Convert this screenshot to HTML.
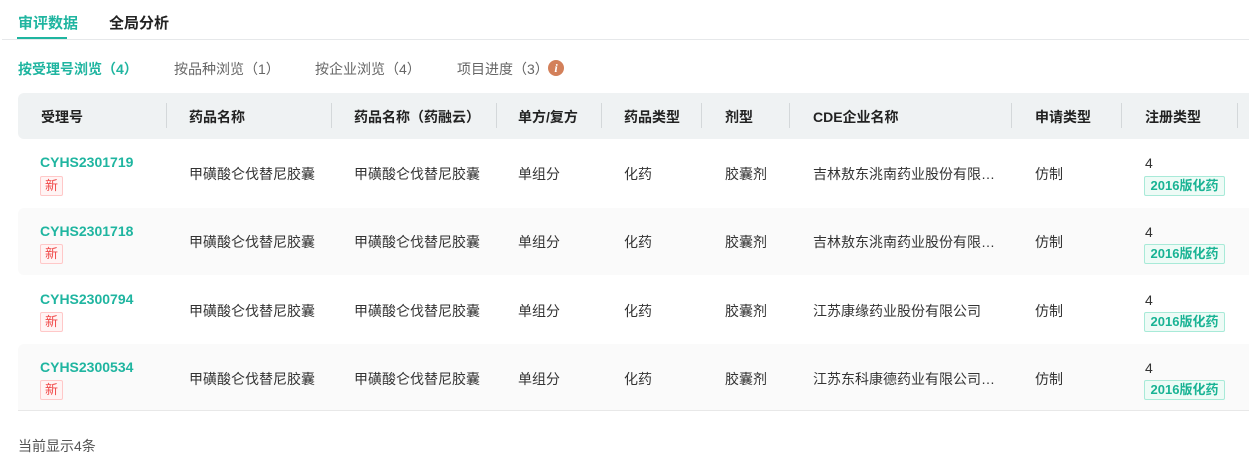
<!DOCTYPE html>
<html><head><meta charset="utf-8"><style>
*{margin:0;padding:0;box-sizing:border-box}
body{width:1249px;height:466px;background:#fff;font-family:"Liberation Sans","Noto Sans CJK SC",sans-serif;color:#333;position:relative;overflow:hidden;font-size:14px}
.a{position:absolute;white-space:nowrap}
.teal{color:#1fb5a0}
.b{font-weight:bold}
.row{position:absolute;left:18px;width:1240px;height:67px;border-radius:6px}
.tag{position:absolute;border:1px solid #ffc8c8;background:#fff4f4;color:#f04848;font-size:13px;line-height:18px;width:23px;height:20px;text-align:center;border-radius:2px}
.reg{position:absolute;border:1px solid #a8ead8;background:#eefbf6;color:#19b394;font-size:13px;font-weight:bold;line-height:18px;height:20px;width:81px;text-align:center;border-radius:2px}
.sep{position:absolute;top:103px;width:1px;height:25px;background:#d4d8da}
</style></head><body>
<div class="a teal b" style="left:18px;top:12px;font-size:15px">审评数据</div>
<div class="a b" style="left:109px;top:12px;font-size:15px;color:#222">全局分析</div>
<div class="a" style="left:17px;top:37px;width:50px;height:3px;background:#1fb5a0"></div>
<div class="a" style="left:2px;top:39px;width:1247px;height:1px;background:#e6e8ea"></div>
<div class="a teal b" style="left:18px;top:59px">按受理号浏览（4）</div>
<div class="a" style="left:174px;top:59px;color:#666">按品种浏览（1）</div>
<div class="a" style="left:315px;top:59px;color:#666">按企业浏览（4）</div>
<div class="a" style="left:457px;top:59px;color:#666">项目进度（3）</div>
<div class="a" style="left:548px;top:60px;width:16px;height:16px;border-radius:50%;background:#d3805a;color:#fff;font:italic bold 12px/16px 'Liberation Serif',serif;text-align:center">i</div>

<div class="a" style="left:18px;top:93px;width:1240px;height:46px;background:#eff2f3;border-radius:6px 0 0 6px"></div>
<div class="sep" style="left:166px"></div><div class="sep" style="left:331px"></div><div class="sep" style="left:496px"></div><div class="sep" style="left:601px"></div><div class="sep" style="left:701px"></div><div class="sep" style="left:789px"></div><div class="sep" style="left:1011px"></div><div class="sep" style="left:1121px"></div><div class="sep" style="left:1237px"></div>
<div class="a b" style="top:107px;left:41px;color:#222">受理号</div>
<div class="a b" style="top:107px;left:189px;color:#222">药品名称</div>
<div class="a b" style="top:107px;left:354px;color:#222">药品名称（药融云）</div>
<div class="a b" style="top:107px;left:518px;color:#222">单方/复方</div>
<div class="a b" style="top:107px;left:624px;color:#222">药品类型</div>
<div class="a b" style="top:107px;left:725px;color:#222">剂型</div>
<div class="a b" style="top:107px;left:813px;color:#222">CDE企业名称</div>
<div class="a b" style="top:107px;left:1035px;color:#222">申请类型</div>
<div class="a b" style="top:107px;left:1145px;color:#222">注册类型</div>

<div class="row" style="top:208px;background:#fafafa"></div>
<div class="row" style="top:344px;background:#fafafa;border-radius:6px 0 0 0;border-bottom:1px solid #e8e8e8"></div>

<!-- rows -->
<div id="rows"></div>
<div class="a" style="left:18px;top:436px;color:#555">当前显示4条</div>

<div class="a teal b" style="left:40px;top:154px">CYHS2301719</div><div class="tag" style="left:40px;top:176px">新</div>
<div class="a" style="left:189px;top:164px">甲磺酸仑伐替尼胶囊</div><div class="a" style="left:354px;top:164px">甲磺酸仑伐替尼胶囊</div><div class="a" style="left:518px;top:164px">单组分</div><div class="a" style="left:624px;top:164px">化药</div><div class="a" style="left:725px;top:164px">胶囊剂</div><div class="a" style="left:813px;top:164px">吉林敖东洮南药业股份有限…</div><div class="a" style="left:1035px;top:164px">仿制</div><div class="a" style="left:1145px;top:155px">4</div><div class="reg" style="left:1144px;top:176px">2016版化药</div>

<div class="a teal b" style="left:40px;top:223px">CYHS2301718</div><div class="tag" style="left:40px;top:244px">新</div>
<div class="a" style="left:189px;top:232px">甲磺酸仑伐替尼胶囊</div><div class="a" style="left:354px;top:232px">甲磺酸仑伐替尼胶囊</div><div class="a" style="left:518px;top:232px">单组分</div><div class="a" style="left:624px;top:232px">化药</div><div class="a" style="left:725px;top:232px">胶囊剂</div><div class="a" style="left:813px;top:232px">吉林敖东洮南药业股份有限…</div><div class="a" style="left:1035px;top:232px">仿制</div><div class="a" style="left:1145px;top:224px">4</div><div class="reg" style="left:1144px;top:244px">2016版化药</div>

<div class="a teal b" style="left:40px;top:291px">CYHS2300794</div><div class="tag" style="left:40px;top:312px">新</div>
<div class="a" style="left:189px;top:301px">甲磺酸仑伐替尼胶囊</div><div class="a" style="left:354px;top:301px">甲磺酸仑伐替尼胶囊</div><div class="a" style="left:518px;top:301px">单组分</div><div class="a" style="left:624px;top:301px">化药</div><div class="a" style="left:725px;top:301px">胶囊剂</div><div class="a" style="left:813px;top:301px">江苏康缘药业股份有限公司</div><div class="a" style="left:1035px;top:301px">仿制</div><div class="a" style="left:1145px;top:292px">4</div><div class="reg" style="left:1144px;top:312px">2016版化药</div>

<div class="a teal b" style="left:40px;top:359px">CYHS2300534</div><div class="tag" style="left:40px;top:380px">新</div>
<div class="a" style="left:189px;top:369px">甲磺酸仑伐替尼胶囊</div><div class="a" style="left:354px;top:369px">甲磺酸仑伐替尼胶囊</div><div class="a" style="left:518px;top:369px">单组分</div><div class="a" style="left:624px;top:369px">化药</div><div class="a" style="left:725px;top:369px">胶囊剂</div><div class="a" style="left:813px;top:369px">江苏东科康德药业有限公司…</div><div class="a" style="left:1035px;top:369px">仿制</div><div class="a" style="left:1145px;top:360px">4</div><div class="reg" style="left:1144px;top:380px">2016版化药</div>
</body></html>
